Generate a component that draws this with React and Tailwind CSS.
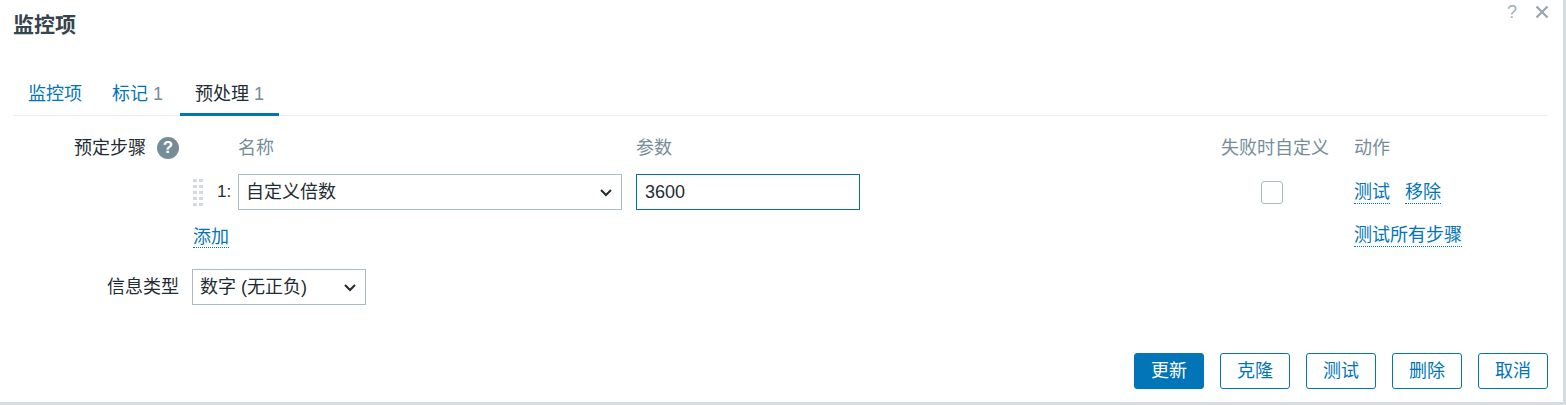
import { useState } from 'react'

const font = { fontFamily: '"Liberation Sans", "Noto Sans CJK SC", sans-serif' }

function Chevron() {
  return (
    <svg width="14" height="9" viewBox="0 0 14 9" className="shrink-0">
      <path d="M2 2 L7 7 L12 2" fill="none" stroke="#1f2c33" strokeWidth="2" />
    </svg>
  )
}

function DragHandle() {
  const dots = []
  for (let r = 0; r < 5; r++) {
    for (let c = 0; c < 2; c++) {
      dots.push(<rect key={`${r}-${c}`} x={c * 6} y={r * 6} width="4" height="3" fill="#d3d9dd" />)
    }
  }
  return (
    <svg width="10" height="27" viewBox="0 0 10 27">
      {dots}
    </svg>
  )
}

function Link({ children }) {
  return (
    <span className="text-[#0275b8] border-b border-dotted border-[#0275b8] leading-[22px] cursor-pointer">
      {children}
    </span>
  )
}

function Button({ children, primary }) {
  return (
    <button
      className={`w-[70px] h-[36px] rounded-[3px] text-[18px] border ${
        primary ? 'bg-[#0275b8] border-[#0275b8] text-white' : 'bg-white border-[#0275b8] text-[#0275b8]'
      }`}
    >
      {children}
    </button>
  )
}

export default function App() {
  const [param, setParam] = useState('3600')

  return (
    <div className="w-[1566px] h-[405px] bg-[#d5dde1] text-[#1f2c33]" style={font}>
      <div className="relative w-[1563px] h-[402px] bg-white pl-[13px] pr-[15px]">
        <div className="absolute top-[2px] right-[14px] flex items-center gap-[18px] text-[#a3b0b8]">
          <span className="text-[18px] leading-[20px]">?</span>
          <svg width="14" height="14" viewBox="0 0 14 14">
            <path d="M1.5 1.5 L12.5 12.5 M12.5 1.5 L1.5 12.5" stroke="#9aa8b0" strokeWidth="2.4" />
          </svg>
        </div>

        <h4 className="pt-[10px] text-[21px] leading-[30px] font-bold text-[#35444d]">监控项</h4>

        <div className="mt-[42px] flex border-b border-[#ebeef0] text-[18px]">
          <div className="px-[15px] pb-[9px] leading-[24px] text-[#0275b8]">监控项</div>
          <div className="px-[15px] pb-[9px] leading-[24px] text-[#0275b8]">
            标记 <span className="text-[#768d99]">1</span>
          </div>
          <div className="ml-[2px] px-[15px] pb-[6px] leading-[24px] border-b-[3px] border-[#0275b8] -mb-px">
            预处理 <span className="text-[#768d99]">1</span>
          </div>
        </div>

        <div className="flex mt-[20px] text-[18px]">
          <div className="w-[166px] shrink-0 flex justify-end items-start gap-[11px]">
            <span className="leading-[24px]">预定步骤</span>
            <span className="w-[22px] h-[22px] mt-px rounded-full bg-[#768d99] text-white text-[17px] font-bold leading-[22px] text-center">
              ?
            </span>
          </div>
          <div className="ml-[14px] flex-1">
            <div className="flex h-[24px] leading-[24px] text-[#768d99]">
              <div className="w-[45px]" />
              <div className="w-[384px]">名称</div>
              <div className="ml-[14px] w-[224px]">参数</div>
              <div className="ml-[361px] w-[108px] whitespace-nowrap">失败时自定义</div>
              <div className="ml-[25px]">动作</div>
            </div>

            <div className="flex items-center h-[36px] mt-[14px]">
              <div className="w-[45px] flex items-center">
                <DragHandle />
                <span className="ml-[14px] text-[17px]">1:</span>
              </div>
              <div className="w-[384px] h-[36px] border border-[#acbbc2] flex items-center justify-between pl-[7px] pr-[8px]">
                <span>自定义倍数</span>
                <Chevron />
              </div>
              <input
                value={param}
                onChange={e => setParam(e.target.value)}
                className="ml-[14px] w-[224px] h-[36px] border border-[#0a6aa6] px-[8px] text-[18px] outline-none text-[#1f2c33]"
              />
              <div className="ml-[361px] w-[108px] flex pl-[40px]">
                <span className="w-[22px] h-[23px] rounded-[3px] border border-[#acbbc2] bg-white" />
              </div>
              <div className="ml-[25px] flex gap-[15px]">
                <Link>测试</Link>
                <Link>移除</Link>
              </div>
            </div>

            <div className="flex h-[24px] mt-[14px] items-start">
              <div className="w-[1161px]">
                <Link>添加</Link>
              </div>
              <Link>测试所有步骤</Link>
            </div>
          </div>
        </div>

        <div className="flex items-center mt-[21px] text-[18px]">
          <div className="w-[166px] shrink-0 text-right">信息类型</div>
          <div className="ml-[13px] w-[174px] h-[36px] border border-[#acbbc2] flex items-center justify-between pl-[7px] pr-[8px]">
            <span>数字 (无正负)</span>
            <Chevron />
          </div>
        </div>

        <div className="flex justify-end gap-[16px] mt-[48px]">
          <Button primary>更新</Button>
          <Button>克隆</Button>
          <Button>测试</Button>
          <Button>删除</Button>
          <Button>取消</Button>
        </div>
      </div>
    </div>
  )
}
